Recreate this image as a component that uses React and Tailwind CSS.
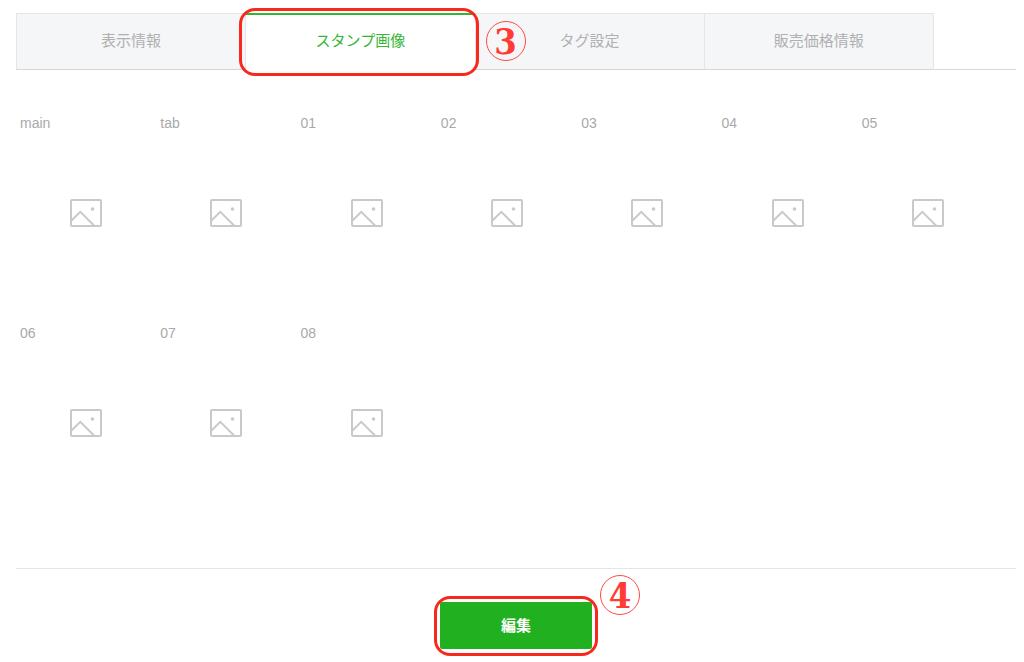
import { useState } from 'react'
import clsx from 'clsx'

const tabs = ['表示情報', 'スタンプ画像', 'タグ設定', '販売価格情報']
const stamps = ['main', 'tab', '01', '02', '03', '04', '05', '06', '07', '08']

const PlaceholderIcon = () => (
    <svg width="32" height="28" viewBox="0 0 32 28" fill="none" stroke="#c9c9c9" strokeWidth="2" aria-hidden="true">
        <rect x="1" y="1" width="30" height="26" rx="1" />
        <path d="M1.5 21.5 L10.3 12.8 L24.5 27" />
        <circle cx="22.5" cy="10" r="1.8" fill="#c9c9c9" stroke="none" />
    </svg>
)

// red numbered marker used for the step-by-step guide
const StepMark = ({ number, className }) => (
    <span
        className={clsx(
            "pointer-events-none absolute z-20 flex h-10 w-10 items-center justify-center rounded-full border border-[#ff4a45] font-['DejaVu_Serif_Condensed','DejaVu_Serif',serif] text-4xl leading-10 font-bold text-[#ff3b36]",
            className
        )}
    >
        {number}
    </span>
)

const StepFrame = ({ className }) => (
    <span
        className={clsx(
            'pointer-events-none absolute z-10 rounded-2xl border-3 border-[#f9281c]',
            className
        )}
    />
)

const App = () => {
    const [active, setActive] = useState(1)

    return (
        <main className="bg-white pt-[13px] pr-2 pb-[13px] pl-4 font-['Liberation_Sans','Noto_Sans_CJK_JP',sans-serif]">
            <div className="border-b border-[#d7d9dd]">
                <div role="tablist" className="-mb-px grid max-w-[918px] grid-cols-4 border-r border-[#e3e5e7]">
                    {tabs.map((label, i) => (
                        <div key={label} className="relative">
                            <button
                                type="button"
                                role="tab"
                                aria-selected={i === active}
                                onClick={() => setActive(i)}
                                className={clsx(
                                    'h-[57px] w-full border-l border-l-[#e3e5e7] pb-0.5 text-[15px] leading-5',
                                    i === active
                                        ? 'border-t-2 border-b border-t-[#35b535] border-b-white bg-white text-[#35b535]'
                                        : 'border-y border-t-[#e3e5e7] border-b-[#d3d5d7] bg-[#f5f6f8] text-[#b0b0b0]'
                                )}
                            >
                                {label}
                            </button>
                            {i === 1 && (
                                <>
                                    <StepFrame className="-top-[5px] -right-1 -bottom-[6px] -left-[6px]" />
                                    <StepMark number={3} className="top-2 left-full ml-[11px]" />
                                </>
                            )}
                        </div>
                    ))}
                </div>
            </div>

            <ul className="mt-[43px] mr-[18px] grid grid-cols-7">
                {stamps.map((name) => (
                    <li key={name} className="pb-[30px]">
                        <p className="pl-1 text-sm leading-5 text-[#a9a9a9]">{name}</p>
                        <div className="flex h-40 items-center justify-center">
                            <PlaceholderIcon />
                        </div>
                    </li>
                ))}
            </ul>

            <div className="mt-[35px] flex justify-center border-t border-[#e5e5e5] pt-[33px]">
                <div className="relative">
                    <button
                        type="button"
                        className="h-[47px] w-[152px] rounded-xs bg-[#20b020] text-[15px] leading-5 font-bold text-white"
                    >
                        編集
                    </button>
                    <StepFrame className="-top-[6px] -right-[6px] -bottom-[7px] -left-[6px]" />
                    <StepMark number={4} className="-top-[27px] left-full ml-2" />
                </div>
            </div>
        </main>
    )
}

export default App
